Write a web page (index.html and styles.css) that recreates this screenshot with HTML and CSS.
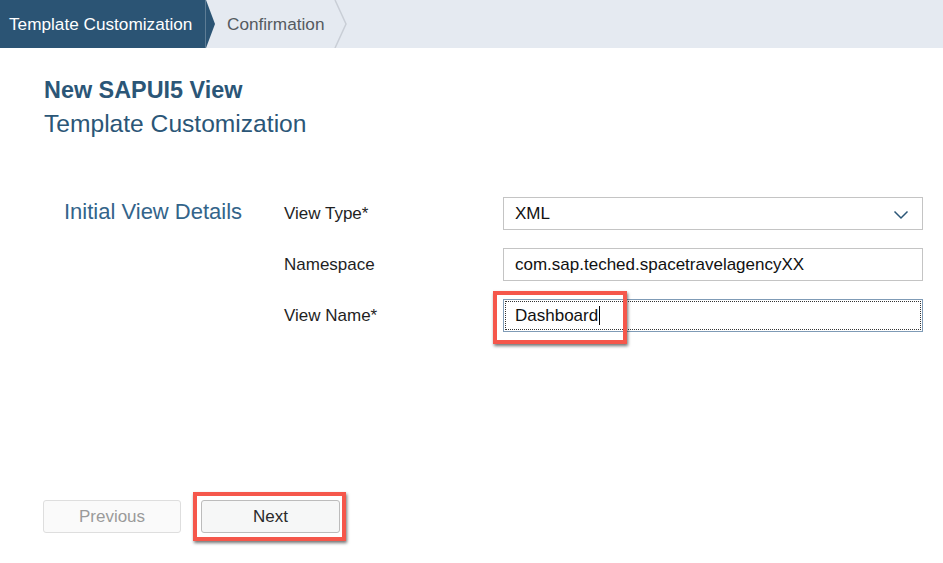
FILE: index.html
```html
<!DOCTYPE html>
<html>
<head>
<meta charset="utf-8">
<link rel="stylesheet" href="styles.css">
</head>
<body>
<header class="steps">
  <div class="step step-active">Template Customization</div>
  <div class="step step-next">Confirmation
    <svg class="chev" width="16" height="48" viewBox="0 0 16 48"><polyline points="2,0 13,24 2,48" fill="none" stroke="#c9ced6" stroke-width="1.5"/></svg>
  </div>
</header>
<main class="content">
  <h1 class="title">New SAPUI5 View</h1>
  <h2 class="subtitle">Template Customization</h2>

  <section class="form">
    <div class="group-title">Initial View Details</div>
    <div class="fields">
      <div class="row">
        <label class="label">View Type*</label>
        <div class="input select">
          <span>XML</span>
          <svg class="caret" width="16" height="10" viewBox="0 0 16 10"><polyline points="1.5,1.5 8,8 14.5,1.5" fill="none" stroke="#2b5677" stroke-width="1.5"/></svg>
        </div>
      </div>
      <div class="row">
        <label class="label">Namespace</label>
        <div class="input"><span>com.sap.teched.spacetravelagencyXX</span></div>
      </div>
      <div class="row">
        <label class="label">View Name*</label>
        <div class="input focused">
          <span>Dashboard</span><span class="cursor"></span>
          <div class="highlight hl-input"></div>
        </div>
      </div>
    </div>
  </section>

  <div class="actions">
    <button class="btn btn-disabled">Previous</button>
    <div class="btn-wrap">
      <button class="btn">Next</button>
      <div class="highlight hl-btn"></div>
    </div>
  </div>
</main>
</body>
</html>
```
FILE: styles.css
```css
html, body {
  margin: 0;
  padding: 0;
  background: #ffffff;
  font-family: "Liberation Sans", Arial, sans-serif;
}

.steps {
  display: flex;
  height: 48px;
  background: #e5eaf1;
}

.step {
  display: flex;
  align-items: center;
  font-size: 17.2px;
  position: relative;
}

.step-active {
  background: #2b5474;
  color: #ffffff;
  padding: 0 10px 0 9px;
  width: 186px;
  border-right: 1px solid #5d7c94;
}

.step-active::after {
  content: "";
  position: absolute;
  top: 0;
  right: -10px;
  width: 0;
  height: 0;
  border-top: 24px solid transparent;
  border-bottom: 24px solid transparent;
  border-left: 9px solid #2b5474;
}

.step-next {
  color: #555a60;
  padding-left: 21px;
}

.chev {
  margin-left: 9px;
}

.content {
  padding: 29px 0 40px 44px;
}

.title {
  margin: 0;
  font-size: 23.4px;
  line-height: 26px;
  font-weight: bold;
  color: #2b5677;
}

.subtitle {
  margin: 7px 0 0 0;
  font-size: 24.6px;
  line-height: 28px;
  font-weight: normal;
  color: #2b5677;
}

.form {
  display: flex;
  margin-top: 59px;
  padding-left: 20px;
}

.group-title {
  width: 220px;
  font-size: 22px;
  line-height: 30px;
  color: #33648a;
}

.fields {
  display: flex;
  flex-direction: column;
  gap: 18px;
}

.row {
  display: flex;
  align-items: center;
  height: 33px;
}

.label {
  width: 219px;
  font-size: 17px;
  color: #1f1f1f;
}

.input {
  position: relative;
  box-sizing: border-box;
  width: 420px;
  height: 33px;
  border: 1px solid #c4c4c4;
  background: #fff;
  display: flex;
  align-items: center;
  padding-left: 11px;
  font-size: 17px;
  color: #111;
}

.select .caret {
  position: absolute;
  right: 13px;
  top: 12px;
}

.focused {
  border-color: #7f9bb6;
}

.focused::before {
  content: "";
  position: absolute;
  inset: 1px;
  border: 1px dotted #333;
  pointer-events: none;
}

.cursor {
  display: inline-block;
  width: 1px;
  height: 19px;
  background: #000;
  margin-left: 1px;
}

.highlight {
  position: absolute;
  box-sizing: border-box;
  border: 4px solid #f5574b;
  box-shadow: 1px 2px 3px rgba(0, 0, 0, 0.55);
  pointer-events: none;
}

.hl-input {
  left: -11px;
  top: -9px;
  width: 134px;
  height: 53px;
}

.actions {
  display: flex;
  gap: 20px;
  margin-top: 168px;
  margin-left: -1px;
}

.btn-wrap {
  position: relative;
}

.btn {
  box-sizing: border-box;
  width: 139px;
  height: 33px;
  border: 1px solid #bcbcbc;
  border-radius: 3px;
  background: #f6f7f7;
  font-family: "Liberation Sans", Arial, sans-serif;
  font-size: 17px;
  color: #2a2a2a;
  padding: 0;
}

.btn-disabled {
  width: 138px;
  color: #9a9a9a;
  border-color: #dedede;
  background: #fafafa;
}

.hl-btn {
  left: -8px;
  top: -8px;
  width: 153px;
  height: 49px;
}
```
